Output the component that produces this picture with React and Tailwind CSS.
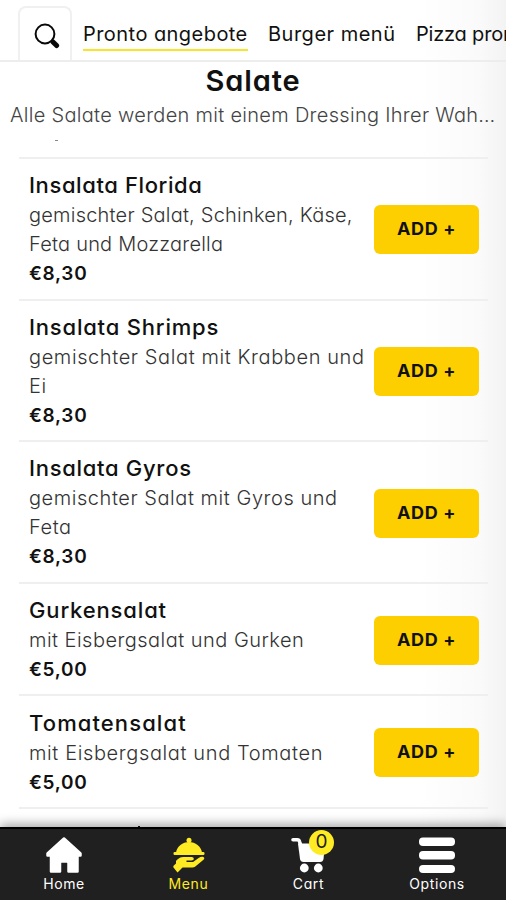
import { clsx } from "clsx";

const categories = [
  { id: "pronto", label: "Pronto angebote", className: "w-[165px] tracking-[0.45px]" },
  { id: "burger", label: "Burger menü", className: "w-[128px] tracking-[0.5px]" },
  { id: "pizza", label: "Pizza pronto", className: "w-[130px] -tracking-[0.2px]" },
];

const salads = [
  {
    name: "Insalata Florida",
    nameTracking: "tracking-[0.6px]",
    lines: ["gemischter Salat, Schinken, Käse,", "Feta und Mozzarella"],
    textTracking: "tracking-[0.22px]",
    price: "€8,30",
  },
  {
    name: "Insalata Shrimps",
    nameTracking: "tracking-[0.8px]",
    lines: ["gemischter Salat mit Krabben und", "Ei"],
    textTracking: "tracking-[0.6px]",
    price: "€8,30",
  },
  {
    name: "Insalata Gyros",
    nameTracking: "tracking-[0.7px]",
    lines: ["gemischter Salat mit Gyros und", "Feta"],
    textTracking: "tracking-[0.55px]",
    price: "€8,30",
  },
  {
    name: "Gurkensalat",
    nameTracking: "tracking-[0.85px]",
    lines: ["mit Eisbergsalat und Gurken"],
    textTracking: "tracking-[0.47px]",
    price: "€5,00",
  },
  {
    name: "Tomatensalat",
    nameTracking: "tracking-[1.1px]",
    lines: ["mit Eisbergsalat und Tomaten"],
    textTracking: "tracking-[0.62px]",
    price: "€5,00",
  },
];

function SearchIcon() {
  return (
    <svg width="26" height="26" viewBox="0 0 26 26" fill="none" stroke="#080808">
      <circle cx="11" cy="11" r="9.4" strokeWidth="2" />
      <path d="M17.5 17.5l2 2" strokeWidth="2.5" />
      <path d="M19 19l3.6 3.6" strokeWidth="5" strokeLinecap="round" />
    </svg>
  );
}

function HomeIcon() {
  return (
    <svg width="36" height="36" viewBox="0 0 36 36" fill="white" stroke="white" strokeWidth="2.5" strokeLinejoin="round">
      <path d="M18 1.5L34.5 16.5V18.5H31.5V34.5H22.5V26Q22.5 24.5 21 24.5H15.5Q14 24.5 14 26V34.5H5V18.5H1.5V16.5Z" />
    </svg>
  );
}

function MenuIcon() {
  return (
    <svg width="32" height="36" viewBox="0 0 32 36" fill="#ffeb24">
      <circle cx="16" cy="3.3" r="2.5" />
      <path d="M3 15.5C4 9.5 9.5 5 16 5S28 9.5 29 15.5Z" />
      <rect x="0.5" y="15" width="31" height="3" rx="1.2" />
      <path d="M3 24C6 20.5 8 20 11 20H18.5C21.5 20 21.5 23.5 18.5 23.5H13.5V25H20L26 20.7C29 18.8 33 20.3 30.5 22.8L22 29.7Q21 30.5 19.5 30.5H9.5L4.5 35.5L0.5 30.5Q0 29.5 .8 28.6L3 26.5Z" />
    </svg>
  );
}

function CartIcon() {
  return (
    <svg width="36" height="36" viewBox="0 0 36 36" fill="white">
      <path
        d="M2 2.8H6.5Q8 2.8 8.5 4.5L10 9"
        fill="none"
        stroke="white"
        strokeWidth="3.6"
        strokeLinecap="round"
        strokeLinejoin="round"
      />
      <path d="M7 6.5H34L32.5 22Q32 25 29 25H12.5Q9.5 25 9 22Z" />
      <circle cx="13.3" cy="31" r="4.4" />
      <circle cx="27.3" cy="31" r="4.4" />
    </svg>
  );
}

function OptionsIcon() {
  return (
    <svg width="36" height="36" viewBox="0 0 36 36" fill="white">
      <rect x="0" y="0.5" width="36" height="8.5" rx="4" />
      <rect x="0" y="14" width="36" height="8.5" rx="4" />
      <rect x="0" y="28" width="36" height="8" rx="4" />
    </svg>
  );
}

const tabs = [
  { id: "home", label: "Home", icon: HomeIcon, className: "w-[128px]" },
  { id: "menu", label: "Menu", icon: MenuIcon, className: "w-[121px]", active: true },
  { id: "cart", label: "Cart", icon: CartIcon, className: "w-[119px]", count: 0 },
  { id: "options", label: "Options", icon: OptionsIcon, className: "w-[138px]" },
];

function CategoryBar() {
  return (
    <header className="flex h-[62px] shrink-0 items-end border-b-2 border-[#ededed] pl-[18px]">
      <button className="flex h-[54px] w-[54px] shrink-0 items-center justify-center rounded-t-lg border-2 border-b-0 border-[#f0f0f0] pt-1 pl-1">
        <SearchIcon />
      </button>
      <nav className="ml-[11px] flex gap-5 pb-[9px]">
        {categories.map((category, i) => (
          <a
            key={category.id}
            className={clsx(
              "h-[33px] shrink-0 border-b-2 text-[20px] leading-[32px] whitespace-nowrap",
              category.className,
              i === 0 ? "border-[#f7e52d]" : "border-transparent",
            )}
          >
            {category.label}
          </a>
        ))}
      </nav>
    </header>
  );
}

function SaladRow({ salad }) {
  return (
    <li className="flex items-center justify-between border-b-2 border-[#efefef] pt-[12.2px] pr-[9px] pb-[9.8px] pl-[10px]">
      <div className="whitespace-nowrap">
        <h2 className={clsx("pb-[2px] text-[22px] leading-[28px] font-medium", salad.nameTracking)}>
          {salad.name}
        </h2>
        {salad.lines.map((line) => (
          <p
            key={line}
            className={clsx("text-[20px] leading-[29px] font-light text-[#333]", salad.textTracking)}
          >
            {line}
          </p>
        ))}
        <p className="text-[19px] leading-[29.6px] font-semibold tracking-[0.7px]">{salad.price}</p>
      </div>
      <button className="h-[49px] w-[105px] shrink-0 rounded-md bg-[#fecf00] pb-[2px] text-[18px] font-bold tracking-[0.6px]">
        ADD +
      </button>
    </li>
  );
}

function TabBar() {
  return (
    <footer className="relative flex h-[73px] shrink-0 border-t-2 border-black bg-[#202020] shadow-[0_-3px_10px_rgba(0,0,0,0.35)]">
      {tabs.map((tab) => {
        const Icon = tab.icon;
        return (
          <button
            key={tab.id}
            className={clsx(
              "flex flex-col items-center pt-2",
              tab.className,
              tab.active ? "text-[#ffeb24]" : "text-white",
            )}
          >
            <span className="relative">
              <Icon />
              {tab.count !== undefined && (
                <span className="absolute -top-[7px] left-[18.5px] flex h-[25px] w-[25px] items-center justify-center rounded-full bg-[#ffeb24] text-[19px] text-[#202020]">
                  {tab.count}
                </span>
              )}
            </span>
            <span className="text-[14px] leading-[22px] tracking-[0.6px]">{tab.label}</span>
          </button>
        );
      })}
    </footer>
  );
}

export default function App() {
  return (
    <div className="flex h-[900px] w-[506px] flex-col overflow-hidden bg-[linear-gradient(90deg,#fff_420px,#fafafa_480px,#f3f3f3_506px)] font-['Inter',sans-serif] text-[#111] [font-feature-settings:'cv11']">
      <CategoryBar />
      <main className="relative flex-1 overflow-hidden">
        <h1 className="pt-[3px] text-center text-[29px] leading-[32px] font-semibold tracking-[0.9px]">
          Salate
        </h1>
        <p className="px-[10px] pt-[3px] text-[20px] leading-[30px] font-light tracking-[0.3px] whitespace-nowrap text-[#444]">
          Alle Salate werden mit einem Dressing Ihrer Wah…
        </p>
        {/* sliver of the clipped second line */}
        <span className="absolute top-[78px] left-[55px] h-px w-[3px] bg-[#888]" />
        <ul className="mt-[27px] mr-[18px] ml-[19px] border-t-2 border-[#efefef]">
          {salads.map((salad) => (
            <SaladRow key={salad.name} salad={salad} />
          ))}
        </ul>
        {/* top of the next row's name, just above the tab bar */}
        <span className="absolute bottom-0 left-[138px] h-px w-[2px] bg-[#111]" />
      </main>
      <TabBar />
    </div>
  );
}
